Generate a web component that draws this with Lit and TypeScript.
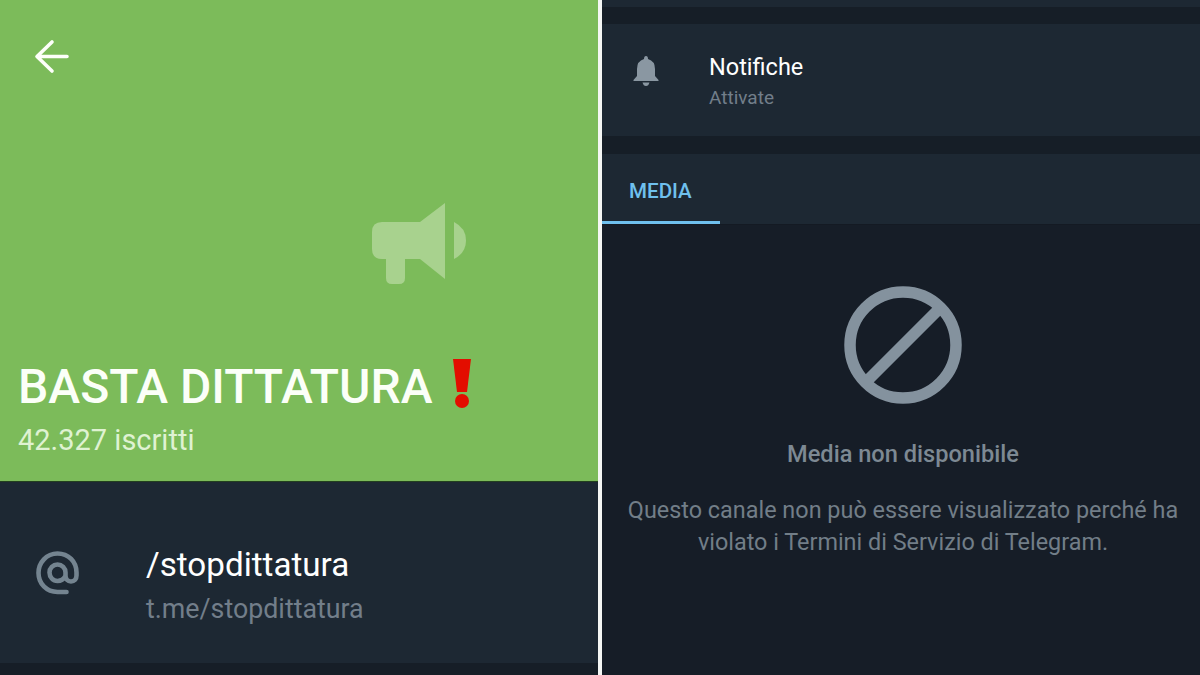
import { LitElement, html, css, svg } from 'lit';
import { customElement } from 'lit/decorators.js';

const back = svg`<path d="M67 56.500H38M52 42 37 56.500 52 71" fill="none" stroke="currentColor" stroke-width="3.600" stroke-linecap="round" stroke-linejoin="round"/>`;

@customElement('app-root')
export class AppRoot extends LitElement {
  static styles = css`
    :host {
      display: grid;
      grid-template-columns: 598px 4px 1fr;
      width: 1200px;
      height: 675px;
      overflow: hidden;
      background: #fff;
      font-family: Roboto, 'Liberation Sans', sans-serif;
      color: #fff;
    }
    .col {
      display: flex;
      flex-direction: column;
      height: 675px;
      background: #161e27;
    }
    .divider {
      background: #f4f6f4;
    }
    .hero {
      height: 482px;
      flex: none;
      box-sizing: border-box;
      padding: 0 0 0 18px;
      display: flex;
      flex-direction: column;
      background: #7cbb5a;
      border-bottom: 1px solid #23401f;
    }
    .back {
      display: block;
      width: 72px;
      height: 72px;
      margin: 21px 0 0 -18px;
      color: #fdfffa;
      flex: none;
    }
    .back svg {
      display: block;
    }
    .mega {
      display: block;
      width: 96px;
      height: 84px;
      margin: 110px 0 0 354px;
      flex: none;
    }
    .title {
      display: flex;
      align-items: center;
      gap: 19px;
      height: 56px;
      margin-top: 72px;
      font-size: 48px;
      font-weight: 500;
      line-height: 56px;
      white-space: nowrap;
      color: #fbfff8;
    }
    .title svg {
      flex: none;
      margin-top: -6px;
    }
    .subs {
      margin-top: 9px;
      font-size: 29px;
      line-height: 32px;
      color: #dff2d2;
    }
    .row {
      display: flex;
      flex: none;
      background: #1d2833;
    }
    .row.at {
      height: 181px;
      padding-left: 36px;
      box-sizing: border-box;
      align-items: flex-start;
    }
    .row.at svg {
      display: block;
      margin-top: 69px;
      flex: none;
    }
    .row.at .text {
      margin: 60px 0 0 66px;
    }
    .row.at .main {
      font-size: 33.200px;
      line-height: 46px;
    }
    .row.at .sub {
      margin-top: 5px;
      font-size: 26.800px;
      line-height: 32px;
    }
    .sub {
      color: #727e8a;
    }
    .strip {
      height: 7px;
      flex: none;
      background: #1d2833;
    }
    .row.bell {
      height: 112px;
      margin-top: 17px;
      padding-left: 31px;
      box-sizing: border-box;
      align-items: flex-start;
    }
    .row.bell svg {
      display: block;
      margin-top: 32px;
      flex: none;
    }
    .row.bell .text {
      margin: 27px 0 0 50px;
    }
    .row.bell .main {
      font-size: 23.500px;
      line-height: 32px;
    }
    .row.bell .sub {
      margin-top: 3px;
      font-size: 19px;
      line-height: 24px;
    }
    .tabs {
      height: 71px;
      flex: none;
      margin-top: 18px;
      box-sizing: border-box;
      background: #1d2833;
      border-bottom: 1px solid #141a23;
    }
    .tab {
      width: 118px;
      height: 70px;
      box-sizing: border-box;
      padding: 24px 0 0 27px;
      font-size: 20.600px;
      font-weight: 500;
      line-height: 26px;
      color: #6fc0ee;
      border-bottom: 3px solid #6fc0ee;
    }
    .empty {
      flex: 1;
      display: flex;
      flex-direction: column;
      align-items: center;
      box-sizing: border-box;
      padding-left: 4px;
      background: #161d27;
      text-align: center;
    }
    .empty svg {
      display: block;
      margin-top: 60px;
      flex: none;
    }
    .empty h2 {
      margin: 33px 0 0;
      font-size: 23.600px;
      font-weight: 500;
      line-height: 32px;
      color: #7d8993;
    }
    .empty p {
      margin: 24px 0 0;
      font-size: 23.400px;
      font-weight: 400;
      line-height: 32px;
      color: #727e88;
    }
  `;

  render() {
    return html`
      <div class="col">
        <div class="hero">
          <div class="back">
            <svg width="72" height="72" viewBox="0 21 72 72" aria-hidden="true">${back}</svg>
          </div>
          <svg class="mega" viewBox="0 0 96 84" aria-hidden="true">
            <path
              fill="#a8d28e"
              d="M10 19H48L73 0V76L48 56H33V75Q33 81 27 81H20Q14 81 14 75V56H10Q0 56 0 46V29Q0 19 10 19Z"
            />
            <path fill="#a8d28e" d="M82 19Q94 25 94 37.500T82 56Z" />
          </svg>
          <div class="title">
            BASTA DITTATURA
            <svg width="20" height="50" viewBox="0 0 20 50" aria-hidden="true">
              <path fill="#e30d00" d="M1 0H19L15 33H5Z" />
              <circle cx="10" cy="42" r="7" fill="#e30d00" />
            </svg>
          </div>
          <div class="subs">42.327 iscritti</div>
        </div>
        <div class="row at">
          <svg width="44" height="44" viewBox="0 0 44 44" aria-hidden="true">
            <path
              d="M30.500 41H21.500C10.500 41 2.500 32.500 2.500 22S10.500 2.500 21.500 2.500 40.500 10.500 40.500 21.500V24.500C40.500 28 38.500 30.500 35 30.500S29.500 28 29.500 24.500V21.500C29.500 17 26 13.500 21.500 13.500S13.500 17 13.500 21.500 17 30 21.500 30C24.500 30 27.500 28.500 29.500 25"
              fill="none"
              stroke="#748490"
              stroke-width="4.600"
              stroke-linecap="round"
            />
          </svg>
          <div class="text">
            <div class="main">/stopdittatura</div>
            <div class="sub">t.me/stopdittatura</div>
          </div>
        </div>
      </div>
      <div class="divider"></div>
      <div class="col">
        <div class="strip"></div>
        <div class="row bell">
          <svg width="26" height="30" viewBox="0 0 26 30" aria-hidden="true">
            <path
              fill="#8a97a2"
              d="M13 0Q15 0 15 3Q22 5 22 13V20L25.500 24V25H.5V24L4 20V13Q4 5 11 3Q11 0 13 0ZM9.500 26.500H16.500Q15.500 30 13 30T9.500 26.500Z"
            />
          </svg>
          <div class="text">
            <div class="main">Notifiche</div>
            <div class="sub">Attivate</div>
          </div>
        </div>
        <div class="tabs"><div class="tab">MEDIA</div></div>
        <div class="empty">
          <svg width="120" height="120" viewBox="0 0 120 120" aria-hidden="true">
            <circle cx="60" cy="60" r="53" fill="none" stroke="#84929e" stroke-width="11.500" />
            <path d="M22 98 98 22" stroke="#84929e" stroke-width="11.500" />
          </svg>
          <h2>Media non disponibile</h2>
          <p>
            Questo canale non può essere visualizzato perché ha<br />violato i Termini di Servizio di
            Telegram.
          </p>
        </div>
      </div>
    `;
  }
}
